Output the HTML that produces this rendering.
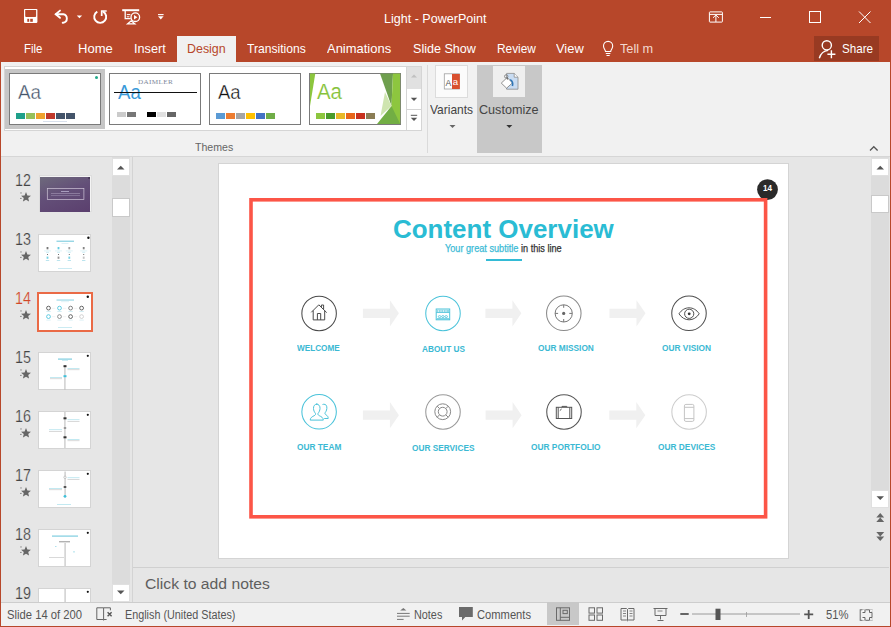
<!DOCTYPE html><html><head><meta charset="utf-8"><style>
*{margin:0;padding:0;box-sizing:border-box}
html,body{width:891px;height:627px;overflow:hidden;background:#E6E6E6;font-family:"Liberation Sans",sans-serif;position:relative}
.t{position:absolute;white-space:nowrap;transform-origin:0 0}
svg{position:absolute;overflow:visible}
</style></head><body>
<div style="position:absolute;left:0px;top:0px;width:891px;height:62px;background:#B7472A"></div>
<svg style="left:0;top:0" width="180" height="36" viewBox="0 0 180 36">
<rect x="24" y="9" width="13.4" height="13.9" rx="0.8" fill="#fff"/>
<path d="M25.2 10.1h10.9v5.9a1 1 0 0 1 -1 1h-8.9a1 1 0 0 1 -1 -1z" fill="#B7472A"/>
<rect x="27.3" y="18.8" width="1.9" height="3" fill="#B7472A"/>
<rect x="30.2" y="18.8" width="2.6" height="3" fill="#B7472A"/>
<g fill="none" stroke="#fff" stroke-width="1.9" stroke-linecap="round">
<path d="M60 10.6l-4.3 3.7 4.3 3.5"/>
<path d="M56 14.3h7.2a4.3 4.3 0 0 1 0 8.5h-0.5"/>
</g>
<path d="M76.8 15.4h5.3l-2.65 2.9z" fill="#fff"/>
<g fill="none" stroke="#fff" stroke-width="1.9">
<path d="M97.3 11.6a6 6 0 1 0 5.8 0"/>
<path d="M101.7 16v-5h5" stroke-width="1.7"/>
</g>
<g fill="none" stroke="#fff" stroke-width="1.3">
<path d="M122.2 10.2h17" stroke-width="2"/>
<path d="M125.2 11v7.6h5.5"/>
<path d="M126.8 14.6h3.6M126.8 16.8h2.6" stroke-width="1"/>
<circle cx="135.3" cy="17.2" r="4.3"/>
<path d="M127.6 23.8h7.2l-3.6-3z"/>
</g>
<path d="M134 14.9v4.6l3.4-2.3z" fill="#fff"/>
<path d="M158 14.6h5.6" stroke="#fff" stroke-width="1.1"/>
<path d="M158 16.3h5.6l-2.8 3.2z" fill="#fff"/>
</svg>
<div class="t" style="left:383.50px;top:12.04px;font-size:13px;line-height:14.52px;color:#fff;transform:scaleX(0.9651);">Light - PowerPoint</div>
<svg style="left:690px;top:0" width="201" height="36" viewBox="690 0 201 36">
<g fill="none" stroke="#fff" stroke-width="1">
<rect x="709.4" y="11.9" width="13" height="10.2" rx="0.6"/>
<path d="M709.4 14.4h13"/>
<path d="M715.9 22v-7M713 17.8l2.9-2.8 2.9 2.8"/>
<path d="M760 17.5h11"/>
<rect x="809.5" y="11.5" width="11" height="11"/>
<path d="M859 11.5l11.5 11.5M870.5 11.5l-11.5 11.5"/>
</g></svg>
<div class="t" style="left:23.60px;top:41.53px;font-size:13px;line-height:14.52px;color:#fff;transform:scaleX(0.8791);">File</div>
<div class="t" style="left:78.00px;top:41.53px;font-size:13px;line-height:14.52px;color:#fff;transform:scaleX(1.0026);">Home</div>
<div class="t" style="left:134.00px;top:41.53px;font-size:13px;line-height:14.52px;color:#fff;transform:scaleX(0.9754);">Insert</div>
<div class="t" style="left:247.00px;top:41.53px;font-size:13px;line-height:14.52px;color:#fff;transform:scaleX(0.9300);">Transitions</div>
<div class="t" style="left:327.40px;top:41.53px;font-size:13px;line-height:14.52px;color:#fff;transform:scaleX(0.9971);">Animations</div>
<div class="t" style="left:413.00px;top:41.53px;font-size:13px;line-height:14.52px;color:#fff;transform:scaleX(0.9667);">Slide Show</div>
<div class="t" style="left:496.60px;top:41.53px;font-size:13px;line-height:14.52px;color:#fff;transform:scaleX(0.9123);">Review</div>
<div class="t" style="left:555.70px;top:41.53px;font-size:13px;line-height:14.52px;color:#fff;transform:scaleX(0.9911);">View</div>
<div class="t" style="left:619.80px;top:41.53px;font-size:13px;line-height:14.52px;color:#F3D8D0;transform:scaleX(0.9785);">Tell m</div>
<div style="position:absolute;left:177px;top:36px;width:59px;height:26px;background:#F1F1F1"></div>
<div class="t" style="left:186.90px;top:41.53px;font-size:13px;line-height:14.52px;color:#B7472A;transform:scaleX(0.9557);">Design</div>
<svg style="left:600px;top:36px" width="20" height="26" viewBox="600 36 20 26"><g fill="none" stroke="#fff" stroke-width="1.1">
<path d="M605.5 51.5c0-1.5-2-3-2-5.5a4.6 4.6 0 0 1 9.2 0c0 2.5-2 4-2 5.5z"/><path d="M605.8 53.5h4.6M606.5 55.5h3.2"/></g></svg>
<div style="position:absolute;left:814px;top:36px;width:65px;height:25px;background:#983A22"></div>
<svg style="left:814px;top:36px" width="25" height="26" viewBox="814 36 25 26"><g fill="none" stroke="#fff" stroke-width="1.4">
<circle cx="826.8" cy="45.3" r="4.6"/><path d="M819.3 58.2c1.2-4 4.2-7.4 8.8-7.8"/><path d="M831.4 50.2v8M827.4 54.2h8"/></g></svg>
<div class="t" style="left:841.60px;top:41.94px;font-size:13px;line-height:14.52px;color:#fff;transform:scaleX(0.8931);">Share</div>
<div style="position:absolute;left:0px;top:62px;width:891px;height:94px;background:#F1F1F1"></div>
<div style="position:absolute;left:0px;top:156px;width:891px;height:1px;background:#D6D6D6"></div>
<div style="position:absolute;left:4px;top:66px;width:418px;height:65px;background:#FFFFFF;border:1px solid #D5D5D5"></div>
<div style="position:absolute;left:5px;top:69px;width:100px;height:60px;background:#C6C6C6"></div>
<div style="position:absolute;left:9.0px;top:72.6px;width:92px;height:52px;background:#fff;border:1px solid #7A7A7A"></div>
<div style="position:absolute;left:109.0px;top:72.6px;width:92px;height:52px;background:#fff;border:1px solid #7A7A7A"></div>
<div style="position:absolute;left:209.0px;top:72.6px;width:92px;height:52px;background:#fff;border:1px solid #7A7A7A"></div>
<div style="position:absolute;left:309.0px;top:72.6px;width:92px;height:52px;background:#fff;border:1px solid #7A7A7A"></div>
<div class="t" style="left:17.70px;top:81.45px;font-size:20.5px;line-height:22.90px;color:#44546A;transform:scaleX(0.9159);-webkit-text-stroke:0.35px #fff">Aa</div>
<div style="position:absolute;left:16px;top:113px;width:9px;height:5.8px;background:#1FA08A"></div>
<div style="position:absolute;left:26px;top:113px;width:9px;height:5.8px;background:#97C05A"></div>
<div style="position:absolute;left:36px;top:113px;width:9px;height:5.8px;background:#F0A22E"></div>
<div style="position:absolute;left:46px;top:113px;width:9px;height:5.8px;background:#C0392B"></div>
<div style="position:absolute;left:56px;top:113px;width:9px;height:5.8px;background:#44546A"></div>
<div style="position:absolute;left:66px;top:113px;width:9px;height:5.8px;background:#44546A"></div>
<div style="position:absolute;left:94.5px;top:75.5px;width:3.5px;height:3.5px;background:#20A889;border-radius:50%"></div>
<div style="position:absolute;left:43px;top:120.5px;width:24px;height:0.6px;background:#D8E0EC"></div>
<div class="t" style="left:137.5px;top:78.9px;font-family:'Liberation Serif',serif;font-size:6.2px;line-height:6.2px;color:#7D889A;letter-spacing:0.3px;transform:scaleX(1.16)">DAIMLER</div>
<div class="t" style="left:117.90px;top:81.25px;font-size:20.5px;line-height:22.90px;color:#3A9AD9;transform:scaleX(0.9079);">Aa</div>
<div style="position:absolute;left:114px;top:91.6px;width:83px;height:1.5px;background:#111"></div>
<div style="position:absolute;left:117px;top:112px;width:9px;height:5.4px;background:#CBCBCB"></div>
<div style="position:absolute;left:127px;top:112px;width:9px;height:5.4px;background:#777777"></div>
<div style="position:absolute;left:147px;top:112px;width:9px;height:5.4px;background:#000000"></div>
<div style="position:absolute;left:157px;top:112px;width:9px;height:5.4px;background:#E0E0E0"></div>
<div style="position:absolute;left:167px;top:112px;width:9px;height:5.4px;background:#666666"></div>
<div class="t" style="left:218.10px;top:81.45px;font-size:20.5px;line-height:22.90px;color:#111;transform:scaleX(0.9000);-webkit-text-stroke:0.35px #fff">Aa</div>
<div style="position:absolute;left:216px;top:113px;width:9px;height:5.8px;background:#5B9BD5"></div>
<div style="position:absolute;left:226px;top:113px;width:9px;height:5.8px;background:#ED7D31"></div>
<div style="position:absolute;left:236px;top:113px;width:9px;height:5.8px;background:#A5A5A5"></div>
<div style="position:absolute;left:246px;top:113px;width:9px;height:5.8px;background:#FFC000"></div>
<div style="position:absolute;left:256px;top:113px;width:9px;height:5.8px;background:#4472C4"></div>
<div style="position:absolute;left:266px;top:113px;width:9px;height:5.8px;background:#70AD47"></div>
<svg style="left:0;top:0" width="410" height="130" viewBox="0 0 410 130">
<path d="M310 73.5h5.3l-5.3 32.5z" fill="#8CC63E"/>
<path d="M380 73.5h13l-1.5 32.5z" fill="#6F9F4E"/>
<path d="M393 73.5h7.2v50.5h-12l3.3-18z" fill="#8DC63F"/>
<path d="M377 124l14.5-18 8.7 18z" fill="#72AE44"/>
<path d="M385 92l6.5 14-11 10z" fill="#CFE5B0"/>
</svg>
<div class="t" style="left:317.30px;top:79.44px;font-size:22.5px;line-height:25.13px;color:#86C23A;transform:scaleX(0.9070);-webkit-text-stroke:0.15px #fff">Aa</div>
<div style="position:absolute;left:316px;top:113.2px;width:9px;height:5.4px;background:#8DC63F"></div>
<div style="position:absolute;left:326px;top:113.2px;width:9px;height:5.4px;background:#4A9B2A"></div>
<div style="position:absolute;left:336px;top:113.2px;width:9px;height:5.4px;background:#E8B828"></div>
<div style="position:absolute;left:346px;top:113.2px;width:9px;height:5.4px;background:#E8651A"></div>
<div style="position:absolute;left:356px;top:113.2px;width:9px;height:5.4px;background:#C8311E"></div>
<div style="position:absolute;left:366px;top:113.2px;width:9px;height:5.4px;background:#8B7D55"></div>
<div style="position:absolute;left:406px;top:66px;width:16px;height:23.5px;background:#E1E1E1;border:1px solid #D5D5D5"></div>
<div style="position:absolute;left:406px;top:89px;width:16px;height:21px;background:#fff;border:1px solid #D5D5D5;border-top:0"></div>
<div style="position:absolute;left:406px;top:109px;width:16px;height:22px;background:#fff;border:1px solid #D5D5D5"></div>
<svg style="left:0;top:0" width="430" height="135" viewBox="0 0 430 135">
<path d="M411 77.5h6l-3-3z" fill="#C0C0C0"/>
<path d="M410.8 97.8h6.4l-3.2 3.2z" fill="#555"/>
<path d="M410.8 115.3h6.4" stroke="#555" stroke-width="1"/>
<path d="M410.8 117.8h6.4l-3.2 3.2z" fill="#555"/>
</svg>
<div style="position:absolute;left:427px;top:65px;width:1px;height:88px;background:#DADADA"></div>
<div style="position:absolute;left:434.8px;top:64.8px;width:33px;height:32.8px;background:#FBFBFB;border:1px solid #DCDCDC"></div>
<svg style="left:0;top:0" width="470" height="100" viewBox="0 0 470 100">
<rect x="444.3" y="73.8" width="15.2" height="15.2" fill="#fff" stroke="#A0A0A0" stroke-width="0.8"/>
<rect x="452" y="74" width="7.8" height="15" fill="#D9502F"/>
<text x="445.6" y="85.6" font-family="Liberation Sans" font-size="8.6" fill="#555">A</text>
<text x="452.8" y="85" font-family="Liberation Sans" font-size="9.6" fill="#fff">a</text>
</svg>
<div class="t" style="left:430.20px;top:102.53px;font-size:13px;line-height:14.52px;color:#444;transform:scaleX(0.9201);">Variants</div>
<div style="position:absolute;left:476.5px;top:65px;width:65.5px;height:88px;background:#C8C8C8"></div>
<div style="position:absolute;left:493px;top:65.7px;width:32px;height:31.3px;background:#EFEFEF"></div>
<svg style="left:0;top:0" width="530" height="100" viewBox="0 0 530 100">
<path d="M506.6 73.4h7.6l3.8 3.8v12h-11.4z" fill="#C9DCF2" stroke="#8C8C8C" stroke-width="0.8"/>
<path d="M514.2 73.4v3.8h3.8" fill="#fff" stroke="#8C8C8C" stroke-width="0.8"/>
<path d="M501.3 83.1l5.9-5.6 5.2 5.4-5.8 5.3z" fill="#fff" stroke="#777" stroke-width="0.8"/>
<circle cx="506.2" cy="76.4" r="1.7" fill="none" stroke="#777" stroke-width="0.8"/>
<path d="M507.4 77.6v2" stroke="#555" stroke-width="0.9"/>
<path d="M510.2 79.6c2.2 1.2 2.9 3.6 2.2 6.4" fill="none" stroke="#2E75B6" stroke-width="1.6"/>
</svg>
<div class="t" style="left:479.40px;top:102.53px;font-size:13px;line-height:14.52px;color:#444;transform:scaleX(0.9703);">Customize</div>
<svg style="left:0;top:0" width="520" height="135" viewBox="0 0 520 135"><path d="M449.5 125h6l-3 3z" fill="#666"/><path d="M506.3 125h6l-3 3z" fill="#333"/></svg>
<div class="t" style="left:194.80px;top:141.39px;font-size:11.5px;line-height:12.85px;color:#666;transform:scaleX(0.9201);">Themes</div>
<svg style="left:0;top:0" width="891" height="160" viewBox="0 0 891 160"><path d="M870 150.5l3.8-3.8 3.8 3.8" fill="none" stroke="#555" stroke-width="1.3"/></svg>
<div style="position:absolute;left:0px;top:157px;width:132px;height:445px;background:#E6E6E6"></div>
<div style="position:absolute;left:132px;top:157px;width:2px;height:445px;background:linear-gradient(90deg,#D9D9D9,#CFCFCF 50%,#D9D9D9)"></div>
<div style="position:absolute;left:112px;top:157px;width:17.5px;height:445px;background:#DCDCDC"></div>
<div style="position:absolute;left:112px;top:158px;width:17.5px;height:17.5px;background:#fff;border:1px solid #E0E0E0"></div>
<div style="position:absolute;left:112px;top:198.2px;width:17.5px;height:18.5px;background:#fff;border:1px solid #C9C9C9"></div>
<div style="position:absolute;left:112px;top:583.5px;width:17.5px;height:18px;background:#fff;border:1px solid #E0E0E0"></div>
<svg style="left:0;top:0" width="135" height="605" viewBox="0 0 135 605">
<path d="M117 169.5h7.5l-3.75-3.8z" fill="#555"/>
<path d="M117 590.5h7.5l-3.75 3.8z" fill="#555"/>
</svg>
<div class="t" style="left:14.90px;top:170.97px;font-size:16.5px;line-height:18.43px;color:#444;transform:scaleX(0.8681);-webkit-text-stroke:0.2px #E6E6E6">12</div>
<div class="t" style="left:14.90px;top:229.97px;font-size:16.5px;line-height:18.43px;color:#444;transform:scaleX(0.8681);-webkit-text-stroke:0.2px #E6E6E6">13</div>
<div class="t" style="left:14.90px;top:288.97px;font-size:16.5px;line-height:18.43px;color:#D24726;transform:scaleX(0.8681);-webkit-text-stroke:0.2px #E6E6E6">14</div>
<div class="t" style="left:14.90px;top:347.97px;font-size:16.5px;line-height:18.43px;color:#444;transform:scaleX(0.8681);-webkit-text-stroke:0.2px #E6E6E6">15</div>
<div class="t" style="left:14.90px;top:406.97px;font-size:16.5px;line-height:18.43px;color:#444;transform:scaleX(0.8681);-webkit-text-stroke:0.2px #E6E6E6">16</div>
<div class="t" style="left:14.90px;top:465.97px;font-size:16.5px;line-height:18.43px;color:#444;transform:scaleX(0.8681);-webkit-text-stroke:0.2px #E6E6E6">17</div>
<div class="t" style="left:14.90px;top:524.97px;font-size:16.5px;line-height:18.43px;color:#444;transform:scaleX(0.8681);-webkit-text-stroke:0.2px #E6E6E6">18</div>
<div class="t" style="left:14.90px;top:583.97px;font-size:16.5px;line-height:18.43px;color:#444;transform:scaleX(0.8681);-webkit-text-stroke:0.2px #E6E6E6">19</div>
<svg style="left:0;top:0" width="40" height="600" viewBox="0 0 40 600"><polygon points="26.00,192.10 27.38,195.41 30.95,195.69 28.23,198.02 29.06,201.51 26.00,199.64 22.94,201.51 23.77,198.02 21.05,195.69 24.62,195.41" fill="#666"/><rect x="20.3" y="192.4" width="1.4" height="1.1" fill="#888"/><rect x="20.0" y="197.9" width="1.7" height="1" fill="#888"/><polygon points="26.00,251.10 27.38,254.41 30.95,254.69 28.23,257.02 29.06,260.51 26.00,258.64 22.94,260.51 23.77,257.02 21.05,254.69 24.62,254.41" fill="#666"/><rect x="20.3" y="251.4" width="1.4" height="1.1" fill="#888"/><rect x="20.0" y="256.9" width="1.7" height="1" fill="#888"/><polygon points="26.00,310.10 27.38,313.41 30.95,313.69 28.23,316.02 29.06,319.51 26.00,317.64 22.94,319.51 23.77,316.02 21.05,313.69 24.62,313.41" fill="#666"/><rect x="20.3" y="310.4" width="1.4" height="1.1" fill="#888"/><rect x="20.0" y="315.9" width="1.7" height="1" fill="#888"/><polygon points="26.00,369.10 27.38,372.41 30.95,372.69 28.23,375.02 29.06,378.51 26.00,376.64 22.94,378.51 23.77,375.02 21.05,372.69 24.62,372.41" fill="#666"/><rect x="20.3" y="369.4" width="1.4" height="1.1" fill="#888"/><rect x="20.0" y="374.9" width="1.7" height="1" fill="#888"/><polygon points="26.00,428.10 27.38,431.41 30.95,431.69 28.23,434.02 29.06,437.51 26.00,435.64 22.94,437.51 23.77,434.02 21.05,431.69 24.62,431.41" fill="#666"/><rect x="20.3" y="428.4" width="1.4" height="1.1" fill="#888"/><rect x="20.0" y="433.9" width="1.7" height="1" fill="#888"/><polygon points="26.00,487.10 27.38,490.41 30.95,490.69 28.23,493.02 29.06,496.51 26.00,494.64 22.94,496.51 23.77,493.02 21.05,490.69 24.62,490.41" fill="#666"/><rect x="20.3" y="487.4" width="1.4" height="1.1" fill="#888"/><rect x="20.0" y="492.9" width="1.7" height="1" fill="#888"/><polygon points="26.00,546.10 27.38,549.41 30.95,549.69 28.23,552.02 29.06,555.51 26.00,553.64 22.94,555.51 23.77,552.02 21.05,549.69 24.62,549.41" fill="#666"/><rect x="20.3" y="546.4" width="1.4" height="1.1" fill="#888"/><rect x="20.0" y="551.9" width="1.7" height="1" fill="#888"/></svg>
<div style="position:absolute;left:38.5px;top:175.2px;width:53px;height:37.3px;background:#F4F4F4;border:0.6px solid #DDD"></div>
<div style="position:absolute;left:40px;top:176.5px;width:50px;height:35.2px;background:linear-gradient(160deg,#6E6A7C 0%,#634F78 45%,#5B3F6E 100%)"></div>
<svg style="left:0;top:0" width="100" height="605" viewBox="0 0 100 605">
<rect x="47.3" y="188.4" width="36.6" height="11.2" fill="none" stroke="#CFC6D8" stroke-width="0.7"/>
<rect x="61" y="191" width="8" height="0.8" fill="#B9B2D0"/>
<rect x="51" y="193.2" width="29" height="0.7" fill="#9C8EAE"/>
<rect x="51" y="195.2" width="29" height="0.7" fill="#8E80A2"/>
<rect x="88.3" y="177.2" width="1.6" height="1.6" fill="#3A2E48"/>
</svg>
<div style="position:absolute;left:38.4px;top:234.3px;width:53px;height:37.5px;background:#fff;border:1px solid #D4D4D4;overflow:hidden"></div>
<div style="position:absolute;left:38.4px;top:352.4px;width:53px;height:37.5px;background:#fff;border:1px solid #D4D4D4;overflow:hidden"></div>
<div style="position:absolute;left:38.4px;top:411.4px;width:53px;height:37.5px;background:#fff;border:1px solid #D4D4D4;overflow:hidden"></div>
<div style="position:absolute;left:38.4px;top:470.4px;width:53px;height:37.5px;background:#fff;border:1px solid #D4D4D4;overflow:hidden"></div>
<div style="position:absolute;left:38.4px;top:529.4px;width:53px;height:37.5px;background:#fff;border:1px solid #D4D4D4;overflow:hidden"></div>
<div style="position:absolute;left:38.4px;top:588.4px;width:53px;height:37.5px;background:#fff;border:1px solid #D4D4D4;overflow:hidden"></div>
<div style="position:absolute;left:37px;top:291.9px;width:56.3px;height:40.4px;background:#fff;border:2.4px solid #EA6A46"></div>
<svg style="left:0;top:0" width="100" height="602" viewBox="0 0 100 602"><rect x="56.5" y="240.6" width="17.5" height="1.3" fill="#8ED3E3"/><rect x="61.5" y="243" width="7" height="0.6" fill="#C8E8F0"/><circle cx="88.4" cy="237.8" r="1.2" fill="#111"/><rect x="46.6" y="247" width="1.8" height="2.3" fill="#555" opacity="0.8"/><rect x="44.0" y="250.7" width="7" height="0.5" fill="#BEE6EF"/><rect x="46.0" y="251.9" width="3" height="0.5" fill="#9ADAE8"/><rect x="47.0" y="254" width="1" height="0.7" fill="#333"/><rect x="46.6" y="256.6" width="1.8" height="2.2" fill="#3FC0DA" opacity="0.7"/><rect x="45.8" y="260" width="3.4" height="0.6" fill="#8ED3E3"/><rect x="57.6" y="247" width="1.8" height="2.3" fill="#3FC0DA" opacity="0.8"/><rect x="55.0" y="250.7" width="7" height="0.5" fill="#BEE6EF"/><rect x="57.0" y="251.9" width="3" height="0.5" fill="#9ADAE8"/><rect x="58.0" y="254" width="1" height="0.7" fill="#333"/><rect x="57.6" y="256.6" width="1.8" height="2.2" fill="#666" opacity="0.7"/><rect x="56.8" y="260" width="3.4" height="0.6" fill="#8ED3E3"/><rect x="68.39999999999999" y="247" width="1.8" height="2.3" fill="#888" opacity="0.8"/><rect x="65.8" y="250.7" width="7" height="0.5" fill="#BEE6EF"/><rect x="67.8" y="251.9" width="3" height="0.5" fill="#9ADAE8"/><rect x="68.8" y="254" width="1" height="0.7" fill="#333"/><rect x="68.39999999999999" y="256.6" width="1.8" height="2.2" fill="#3FC0DA" opacity="0.7"/><rect x="67.6" y="260" width="3.4" height="0.6" fill="#8ED3E3"/><rect x="82.8" y="247" width="1.8" height="2.3" fill="#666" opacity="0.8"/><rect x="80.2" y="250.7" width="7" height="0.5" fill="#BEE6EF"/><rect x="82.2" y="251.9" width="3" height="0.5" fill="#9ADAE8"/><rect x="83.2" y="254" width="1" height="0.7" fill="#333"/><rect x="82.8" y="256.6" width="1.8" height="2.2" fill="#AAA" opacity="0.7"/><rect x="82.0" y="260" width="3.4" height="0.6" fill="#8ED3E3"/><rect x="58" y="268.4" width="14" height="0.6" fill="#A8DDE9"/><rect x="56.5" y="299.4" width="17.5" height="1.3" fill="#A5DCE9"/><rect x="61" y="301.5" width="8" height="0.6" fill="#D0ECF2"/><circle cx="87.8" cy="296.7" r="1.2" fill="#111"/><circle cx="48.5" cy="308.1" r="1.9" fill="#fff" stroke="#444" stroke-width="0.8"/><rect x="46.3" y="311.2" width="4.4" height="0.5" fill="#A8DDE9"/><circle cx="48.5" cy="316.6" r="1.9" fill="#fff" stroke="#3FC0DA" stroke-width="0.8"/><rect x="46.3" y="319.8" width="4.4" height="0.5" fill="#B8E2EC"/><rect x="51.8" y="307.9" width="3.5" height="0.7" fill="#EDEDED"/><rect x="51.8" y="316.4" width="3.5" height="0.7" fill="#EDEDED"/><circle cx="59.5" cy="308.1" r="1.9" fill="#fff" stroke="#3FC0DA" stroke-width="0.8"/><rect x="57.3" y="311.2" width="4.4" height="0.5" fill="#A8DDE9"/><circle cx="59.5" cy="316.6" r="1.9" fill="#fff" stroke="#777" stroke-width="0.8"/><rect x="57.3" y="319.8" width="4.4" height="0.5" fill="#B8E2EC"/><rect x="62.8" y="307.9" width="3.5" height="0.7" fill="#EDEDED"/><rect x="62.8" y="316.4" width="3.5" height="0.7" fill="#EDEDED"/><circle cx="70.6" cy="308.1" r="1.9" fill="#fff" stroke="#666" stroke-width="0.8"/><rect x="68.39999999999999" y="311.2" width="4.4" height="0.5" fill="#A8DDE9"/><circle cx="70.6" cy="316.6" r="1.9" fill="#fff" stroke="#444" stroke-width="0.8"/><rect x="68.39999999999999" y="319.8" width="4.4" height="0.5" fill="#B8E2EC"/><rect x="73.89999999999999" y="307.9" width="3.5" height="0.7" fill="#EDEDED"/><rect x="73.89999999999999" y="316.4" width="3.5" height="0.7" fill="#EDEDED"/><circle cx="81.6" cy="308.1" r="1.9" fill="#fff" stroke="#444" stroke-width="0.8"/><rect x="79.39999999999999" y="311.2" width="4.4" height="0.5" fill="#A8DDE9"/><circle cx="81.6" cy="316.6" r="1.9" fill="#fff" stroke="#C8C8C8" stroke-width="0.8"/><rect x="79.39999999999999" y="319.8" width="4.4" height="0.5" fill="#B8E2EC"/><rect x="58" y="327.3" width="14" height="0.6" fill="#A8DDE9"/><rect x="58" y="358.5" width="14" height="1.2" fill="#7FCDE0"/><rect x="62" y="360.5" width="6" height="0.5" fill="#9ADAE8"/><circle cx="87.8" cy="355.8" r="1.1" fill="#111"/><rect x="64.6" y="365" width="0.7" height="24.5" fill="#999"/><rect x="63.5" y="365.2" width="3" height="2" fill="#333"/><rect x="63.5" y="375.2" width="3" height="2" fill="#3FC0DA"/><rect x="67.5" y="368" width="12" height="0.6" fill="#9ADAE8"/><rect x="67.5" y="369.5" width="12" height="0.6" fill="#C0C0C0"/><rect x="50" y="377" width="12" height="0.6" fill="#9ADAE8"/><rect x="50" y="378.5" width="12" height="0.6" fill="#C0C0C0"/><circle cx="87.8" cy="414.8" r="1.1" fill="#111"/><rect x="64.6" y="412" width="0.7" height="36" fill="#999"/><rect x="63.5" y="417.3" width="3" height="2" fill="#333"/><rect x="63.8" y="427" width="2.4" height="2" fill="#999"/><rect x="63.5" y="436.3" width="3" height="2" fill="#333"/><rect x="67.5" y="419.5" width="12" height="0.6" fill="#9ADAE8"/><rect x="67.5" y="421" width="12" height="0.6" fill="#C0C0C0"/><rect x="49" y="429.5" width="13" height="0.6" fill="#9ADAE8"/><rect x="49" y="431" width="13" height="0.6" fill="#C0C0C0"/><rect x="67.5" y="439" width="12" height="0.6" fill="#9ADAE8"/><rect x="67.5" y="440.5" width="12" height="0.6" fill="#C0C0C0"/><circle cx="87.8" cy="473.8" r="1.1" fill="#111"/><rect x="64.7" y="471.5" width="0.7" height="26" fill="#999"/><circle cx="65" cy="477.3" r="1.2" fill="#fff" stroke="#999" stroke-width="0.5"/><rect x="63.7" y="486" width="2.6" height="2" fill="#555"/><circle cx="65" cy="496.3" r="1.4" fill="#3FC0DA"/><rect x="67.5" y="477.5" width="12" height="0.6" fill="#9ADAE8"/><rect x="67.5" y="479" width="12" height="0.6" fill="#C0C0C0"/><rect x="49" y="488" width="13" height="0.6" fill="#9ADAE8"/><rect x="49" y="489.5" width="13" height="0.6" fill="#C0C0C0"/><rect x="57" y="504" width="14" height="0.6" fill="#9ADAE8"/><circle cx="87.8" cy="532.8" r="1.1" fill="#111"/><rect x="52" y="535.5" width="26" height="1.2" fill="#7FCDE0"/><rect x="59" y="541.5" width="11" height="0.7" fill="#666"/><rect x="64.7" y="543" width="0.7" height="23" fill="#999"/><rect x="55" y="546" width="1.5" height="0.8" fill="#9ADAE8"/><rect x="73" y="551.5" width="2" height="0.8" fill="#9ADAE8"/><rect x="49" y="557" width="15" height="0.6" fill="#C0C0C0"/><circle cx="87.8" cy="591.8" r="1.1" fill="#111"/><rect x="64.7" y="589" width="0.7" height="13" fill="#999"/></svg>
<div style="position:absolute;left:133.3px;top:157px;width:738px;height:410px;background:#E6E6E6"></div>
<div style="position:absolute;left:218px;top:163px;width:571px;height:396px;background:#fff;border:1px solid #D4D4D4"></div>
<div class="t" style="left:393.10px;top:215.23px;font-size:25.6px;line-height:28.60px;color:#2ABCD4;font-weight:bold;transform:scaleX(1.0146);">Content Overview</div>
<div class="t" style="left:0;top:0;font-size:0"></div>
<div class="t" style="left:445.3px;top:243.05px;font-size:10px;line-height:11.17px;transform:scaleX(0.915);letter-spacing:0;-webkit-text-stroke:0.25px"><span style="color:#3BBBD6">Your great subtitle</span><span style="color:#333"> in this line</span></div>
<div style="position:absolute;left:486px;top:258.5px;width:35.8px;height:2.2px;background:#33BBD6"></div>
<svg style="left:0;top:0" width="891" height="600" viewBox="0 0 891 600"><circle cx="767.5" cy="189.6" r="10.4" fill="#2A2A2A"/></svg>
<div class="t" style="left:763.20px;top:183.38px;font-size:9.3px;line-height:10.39px;color:#fff;font-weight:bold;transform:scaleX(0.8718);">14</div>
<svg style="left:0;top:0" width="891" height="600" viewBox="0 0 891 600"><rect x="251" y="199.8" width="514.6" height="317" fill="none" stroke="#FC5547" stroke-width="3.6"/></svg>
<svg style="left:0;top:0" width="891" height="600" viewBox="0 0 891 600"><path d="M362.9 308.7h27v-8.5l9 13.1-9 13.1v-8.5h-27z" fill="#F0F0F0"/><path d="M485.4 308.7h27v-8.5l9 13.1-9 13.1v-8.5h-27z" fill="#F0F0F0"/><path d="M609.5 308.7h27v-8.5l9 13.1-9 13.1v-8.5h-27z" fill="#F0F0F0"/><path d="M362.9 410.59999999999997h27v-8.5l9 13.1-9 13.1v-8.5h-27z" fill="#F0F0F0"/><path d="M485.6 410.59999999999997h27v-8.5l9 13.1-9 13.1v-8.5h-27z" fill="#F0F0F0"/><path d="M609.3 410.59999999999997h27v-8.5l9 13.1-9 13.1v-8.5h-27z" fill="#F0F0F0"/><circle cx="319.1" cy="313.4" r="17.25" fill="none" stroke="#4A4A4A" stroke-width="1.05"/><g fill="none" stroke="#4A4A4A" stroke-width="1"><path d="M311.3 312.3l7.5-7.5 7.9 7.8"/><path d="M313.2 310.6v9.3h11.5v-9.3"/><path d="M317.4 319.9v-6.4h3.3v6.4"/><path d="M321.4 307v-2h2.2v4.2"/></g><circle cx="443" cy="313.4" r="17.25" fill="none" stroke="#4BC3DA" stroke-width="1.05"/><g fill="none" stroke="#4BC3DA" stroke-width="1"><rect x="436.2" y="309" width="13.5" height="10.8"/><path d="M436.2 312.4h13.5"/><path d="M437 318.8h12"/><path d="M438.3 316.6a1.3 1 0 1 0 2.6 0a1.3 1 0 1 0 -2.6 0M441.6 316.6a1.3 1 0 1 0 2.6 0a1.3 1 0 1 0 -2.6 0M444.9 316.6a1.3 1 0 1 0 2.6 0a1.3 1 0 1 0 -2.6 0" stroke-width="0.8"/></g><rect x="436.6" y="309.6" width="12.7" height="2.6" fill="#8FD8E6"/><path d="M438.5 310v2M441 310v2M443.5 310v2M446 310v2" stroke="#fff" stroke-width="0.6"/><circle cx="563.8" cy="313.3" r="17.25" fill="none" stroke="#8A8A8A" stroke-width="1.05"/><g fill="none" stroke="#777" stroke-width="1"><circle cx="563.7" cy="313.4" r="8.6"/><path d="M563.7 304.8v3M563.7 322v-3M555.1 313.4h3M572.3 313.4h-3"/></g><circle cx="563.7" cy="313.4" r="1.6" fill="#666"/><circle cx="689" cy="313.3" r="17.25" fill="none" stroke="#4F4F4F" stroke-width="1.05"/><g fill="none" stroke="#4F4F4F" stroke-width="1"><path d="M679 313.8c5-8 15.2-8 20.2 0c-5 8-15.2 8-20.2 0z"/><circle cx="689.2" cy="313.8" r="4.6"/></g><circle cx="689.2" cy="313.8" r="1.4" fill="#333"/><circle cx="319.1" cy="411.8" r="17.25" fill="none" stroke="#4BC3DA" stroke-width="1.05"/><g fill="none" stroke="#4BC3DA" stroke-width="1"><path d="M322.5 404.5c1.5-0.6 4-0.3 4.3 2.3c0.3 2.3-0.5 4.4-1.6 5.8c-0.6 0.8 0 1.8 1 2.4c1.5 0.8 2 2 2 3.5h-4"/><path d="M316.2 404.1c2.5 0 4 1.8 3.8 4.4c-0.1 2-0.9 3.6-1.9 4.8c-0.6 0.8 0 1.8 1.2 2.4c1.8 0.9 4 1.8 4 4.4h-13.1c0.1-2.6 2.2-3.5 4-4.4c1.2-0.6 1.8-1.6 1.2-2.4c-1-1.2-1.8-2.8-1.9-4.8c-0.2-2.6 1.3-4.4 3.8-4.4z"/></g><circle cx="443" cy="412" r="17.25" fill="none" stroke="#9A9A9A" stroke-width="1.05"/><g fill="none" stroke="#888" stroke-width="1"><circle cx="442.7" cy="411.7" r="7.9"/><circle cx="442.7" cy="411.7" r="4.4"/><path d="M439.6 408.6l-2.5-2.5M445.8 408.6l2.5-2.5M439.6 414.8l-2.5 2.5M445.8 414.8l2.5 2.5"/></g><circle cx="564" cy="412" r="17.25" fill="none" stroke="#555" stroke-width="1.05"/><g fill="none" stroke="#555" stroke-width="1"><rect x="556.3" y="407.3" width="15.4" height="11.2"/><path d="M558.2 407.3v11.2M569.8 407.3v11.2"/><path d="M562 407.2v-0.8h4.8v0.8"/><path d="M559.8 410.6l1.8-1.6"/></g><circle cx="689.1" cy="412" r="17.25" fill="none" stroke="#CDCDCD" stroke-width="1.05"/><g fill="none" stroke="#C4C4C4" stroke-width="1"><rect x="684.4" y="404.4" width="9.5" height="17" rx="1.5"/><path d="M684.4 407.3h9.5M684.4 418.6h9.5"/></g></svg>
<div class="t" style="left:297.10px;top:343.11px;font-size:9.6px;line-height:10.72px;color:#3BB9D3;font-weight:bold;transform:scaleX(0.8541);">WELCOME</div>
<div class="t" style="left:421.70px;top:343.71px;font-size:9.6px;line-height:10.72px;color:#3BB9D3;font-weight:bold;transform:scaleX(0.8581);">ABOUT US</div>
<div class="t" style="left:538.10px;top:342.81px;font-size:9.6px;line-height:10.72px;color:#3BB9D3;font-weight:bold;transform:scaleX(0.8659);">OUR MISSION</div>
<div class="t" style="left:662.20px;top:342.81px;font-size:9.6px;line-height:10.72px;color:#3BB9D3;font-weight:bold;transform:scaleX(0.8684);">OUR VISION</div>
<div class="t" style="left:296.80px;top:441.51px;font-size:9.6px;line-height:10.72px;color:#3BB9D3;font-weight:bold;transform:scaleX(0.8669);">OUR TEAM</div>
<div class="t" style="left:412.00px;top:442.51px;font-size:9.6px;line-height:10.72px;color:#3BB9D3;font-weight:bold;transform:scaleX(0.8635);">OUR SERVICES</div>
<div class="t" style="left:531.30px;top:441.51px;font-size:9.6px;line-height:10.72px;color:#3BB9D3;font-weight:bold;transform:scaleX(0.8698);">OUR PORTFOLIO</div>
<div class="t" style="left:657.90px;top:441.51px;font-size:9.6px;line-height:10.72px;color:#3BB9D3;font-weight:bold;transform:scaleX(0.8678);">OUR DEVICES</div>
<div style="position:absolute;left:871.3px;top:157px;width:18px;height:410px;background:#DCDCDC"></div>
<div style="position:absolute;left:871.3px;top:158px;width:18px;height:17.5px;background:#fff;border:1px solid #E0E0E0"></div>
<div style="position:absolute;left:871.3px;top:195.3px;width:18px;height:18.2px;background:#fff;border:1px solid #C9C9C9"></div>
<div style="position:absolute;left:871.3px;top:490px;width:18px;height:17.5px;background:#fff;border:1px solid #E0E0E0"></div>
<div style="position:absolute;left:871.3px;top:507.5px;width:18px;height:59.5px;background:#E6E6E6"></div>
<svg style="left:0;top:0" width="891" height="600" viewBox="0 0 891 600">
<path d="M876.5 169.5h7.5l-3.75-3.8z" fill="#555"/>
<path d="M876.5 496.2h7.5l-3.75 3.8z" fill="#555"/>
<path d="M876.3 517.6h7.9l-3.95-4.5zM876.3 522h7.9l-3.95-4.6z" fill="#666"/>
<path d="M876.3 532h7.9l-3.95 4.5zM876.3 536.4h7.9l-3.95 4.6z" fill="#666"/>
</svg>
<div style="position:absolute;left:133.3px;top:567px;width:756px;height:35px;background:#E6E6E6"></div>
<div style="position:absolute;left:133.3px;top:566.8px;width:756px;height:1.2px;background:#D0D0D0"></div>
<div class="t" style="left:145.30px;top:574.97px;font-size:15.5px;line-height:17.31px;color:#5E5E5E;transform:scaleX(1.0136);">Click to add notes</div>
<div style="position:absolute;left:0px;top:602px;width:891px;height:24px;background:#F1F1F1"></div>
<div style="position:absolute;left:0px;top:601.6px;width:891px;height:0.9px;background:#CDCDCD"></div>
<div class="t" style="left:7.00px;top:608.59px;font-size:12.5px;line-height:13.96px;color:#555;transform:scaleX(0.8996);">Slide 14 of 200</div>
<div class="t" style="left:125.00px;top:608.59px;font-size:12.5px;line-height:13.96px;color:#555;transform:scaleX(0.8638);">English (United States)</div>
<div class="t" style="left:414.40px;top:608.59px;font-size:12.5px;line-height:13.96px;color:#555;transform:scaleX(0.8674);">Notes</div>
<div class="t" style="left:476.90px;top:608.59px;font-size:12.5px;line-height:13.96px;color:#555;transform:scaleX(0.8935);">Comments</div>
<div style="position:absolute;left:547.2px;top:602.4px;width:32px;height:22.4px;background:#C8C8C8"></div>
<div class="t" style="left:826.00px;top:608.89px;font-size:12.5px;line-height:13.96px;color:#555;transform:scaleX(0.9000);">51%</div>
<svg style="left:0;top:0" width="891" height="627" viewBox="0 0 891 627">
<g fill="none" stroke="#666" stroke-width="1">
<path d="M96.8 607.8h6.8v11.7h-6.8zM103.6 607.8h6.8v2.5M103.6 619.5h3M103.6 619.5v1"/>
</g>
<path d="M107.6 612.2l4 4M111.6 612.2l-4 4" stroke="#555" stroke-width="1.4"/>
<g stroke="#777" stroke-width="1"><path d="M397 613.4h12.7M397 616.2h12.7M397 619.4h6.6"/></g>
<path d="M400.2 610.6l3.1-2.6 3.1 2.6z" fill="#777"/>
<path d="M459 607h13.8v10h-7.5l-3.3 3.5v-3.5h-3z" fill="#6A6A6A"/>
<g fill="none" stroke="#6A6A6A" stroke-width="1">
<rect x="556.5" y="607.8" width="13" height="12.5"/><path d="M560.3 607.8v12.5M560.3 617.3h9.2"/><rect x="563" y="610.3" width="4.3" height="3.3"/>
<rect x="589" y="607.8" width="5.5" height="5.3"/><rect x="597" y="607.8" width="5.5" height="5.3"/><rect x="589" y="615" width="5.5" height="5.3"/><rect x="597" y="615" width="5.5" height="5.3"/>
<path d="M621 608.5h5.5l1 1 1-1h5.5v11.5h-5.5l-1 0.8-1-0.8h-5.5z"/><path d="M627.5 609.5v11"/>
<path d="M623 611h3M623 613.5h3M623 616h3M629.5 611h3M629.5 613.5h3M629.5 616h3" stroke-width="0.8"/>
<path d="M653.5 608.5h14M655 608.5v7h11v-7M660.5 615.5v4M657.5 620.5h6"/>
<path d="M657.5 611h5" stroke-width="0.8"/>
<rect x="860.2" y="609.8" width="11.8" height="10.5"/>
</g>
<path d="M680.3 614h8.4" stroke="#555" stroke-width="1.8"/>
<path d="M692 614h108" stroke="#9A9A9A" stroke-width="1"/>
<path d="M746.5 612v5" stroke="#9A9A9A" stroke-width="0.8"/>
<rect x="715.5" y="608.7" width="5" height="11.3" fill="#555"/>
<path d="M804.2 614.4h9M808.7 609.9v9" stroke="#555" stroke-width="1.8"/>
<path d="M863 612.5v-2.3h2.5M869.5 610.2h2.5v2.3M863 617.5v2.5h2.5M872 617.5v2.5h-2.5" fill="none" stroke="#fff" stroke-width="1.2"/>
<path d="M862.5 612.5h2.5v-2.5M869.5 610v2.5h2.5M862.5 617.5h2.5v2.5M872 617.5h-2.5v2.5" fill="none" stroke="#666" stroke-width="1"/>
</svg>
<div style="position:absolute;left:0px;top:62px;width:1.2px;height:565px;background:#B7472A"></div>
<div style="position:absolute;left:889.5px;top:62px;width:1.5px;height:565px;background:#B7472A"></div>
<div style="position:absolute;left:0px;top:626px;width:891px;height:1px;background:#B7472A"></div>
</body></html>
